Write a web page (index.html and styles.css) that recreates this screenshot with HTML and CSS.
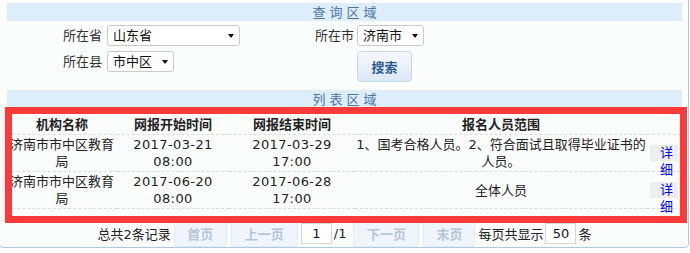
FILE: index.html
```html
<!DOCTYPE html>
<html lang="zh-CN">
<head>
<meta charset="UTF-8">
<title>查询区域</title>
<link rel="stylesheet" href="styles.css">
</head>
<body>

<div class="panel">
    <!-- 查询区域 -->
    <div class="bar">查询区域</div>
    <div class="query-form">
        <span class="label">所在省</span>
        <span class="field"><span class="select wide">山东省<i class="arrow"></i></span></span>
        <span class="label">所在市</span>
        <span class="field"><span class="select">济南市<i class="arrow"></i></span></span>

        <span class="label">所在县</span>
        <span class="field"><span class="select">市中区<i class="arrow"></i></span></span>
        <span class="label"></span>
        <span class="field"><button class="search-btn">搜索</button></span>
    </div>

    <!-- 列表区域 -->
    <div class="bar bar-list">列表区域</div>
    <table class="list">
        <colgroup>
            <col style="width: 110px">
            <col style="width: 112px">
            <col style="width: 126px">
            <col style="width: 292px">
            <col style="width: 34px">
        </colgroup>
        <thead>
            <tr>
                <th>机构名称</th>
                <th>网报开始时间</th>
                <th>网报结束时间</th>
                <th>报名人员范围</th>
                <th></th>
            </tr>
        </thead>
        <tbody>
            <tr>
                <td>济南市市中区教育局</td>
                <td class="date">2017-03-21 08:00</td>
                <td class="date">2017-03-29 17:00</td>
                <td>1、国考合格人员。2、符合面试且取得毕业证书的人员。</td>
                <td class="op"><div class="op-wrap"><a href="#" class="detail"><span class="first">详</span><span class="second">细</span></a></div></td>
            </tr>
            <tr>
                <td>济南市市中区教育局</td>
                <td class="date">2017-06-20 08:00</td>
                <td class="date">2017-06-28 17:00</td>
                <td>全体人员</td>
                <td class="op"><div class="op-wrap"><a href="#" class="detail"><span class="first">详</span><span class="second">细</span></a></div></td>
            </tr>
        </tbody>
    </table>

    <div class="pager">
        <span class="pager-text">总共2条记录</span>
        <button class="page-btn w53">首页</button>
        <button class="page-btn w67">上一页</button>
        <span class="page-input">1</span>
        <span class="pager-text slash">/1</span>
        <button class="page-btn w66">下一页</button>
        <button class="page-btn w52">末页</button>
        <span class="pager-text">每页共显示</span>
        <span class="page-input">50</span>
        <span class="pager-text">条</span>
    </div>

    <!-- highlight frame -->
    <div class="highlight"></div>
</div>

</body>
</html>
```

FILE: styles.css
```css
/* page base */
body {
    margin: 0;
    font-family: "DejaVu Sans", "Noto Sans CJK SC", sans-serif;
    font-size: 13px;
    color: #222;
    background: #fff;
}

.panel {
    position: relative;
    margin: -4px 1px 0 -1px;
    padding: 6px 6px 0 7px;
    border: 1px solid #adc8e0;
    border-radius: 4px;
    background: #fbfdfd;
}

/* section title bars */
.bar {
    height: 18px;
    line-height: 18px;
    background: #deedfa;
    color: #4a77a6;
    text-align: center;
    letter-spacing: 4px;
    padding-left: 4px;
    font-family: "Noto Sans CJK SC", sans-serif;
}

.bar-list {
    height: 17px;
    line-height: 17px;
    margin-top: 8px;
}

/* query form */
.query-form {
    display: grid;
    grid-template-columns: 96px 206px 46px auto;
    row-gap: 5px;
    margin-top: 4px;
    align-items: start;
}

.label {
    text-align: right;
    line-height: 21px;
    color: #333;
    padding-right: 1px;
}

.field {
    padding-left: 4px;
}

.query-form .field:nth-child(4n) {
    padding-left: 2px;
}

.select {
    box-sizing: border-box;
    display: inline-flex;
    align-items: center;
    justify-content: space-between;
    height: 21px;
    width: 67px;
    padding: 0 5px;
    border: 1px solid #cacaca;
    border-radius: 3px;
    background: #fff;
    color: #111;
    line-height: 19px;
}

.select.wide {
    width: 133px;
}

.arrow {
    width: 0;
    height: 0;
    border-top: 4px solid #111;
    border-left: 3.5px solid transparent;
    border-right: 3.5px solid transparent;
}

.search-btn {
    box-sizing: border-box;
    width: 55px;
    height: 31px;
    padding: 0;
    border: 1px solid #c5d8eb;
    border-radius: 4px;
    background: linear-gradient(#f6f9fd, #dae8f6);
    color: #2d5d8c;
    font-family: "Noto Sans CJK SC", sans-serif;
    font-size: 13px;
    font-weight: bold;
}

/* list table */
.list {
    width: 674px;
    table-layout: fixed;
    border-collapse: collapse;
    color: #222;
}

.list th {
    padding: 8px 0 0;
    line-height: 19px;
    font-weight: bold;
    text-align: center;
    border-bottom: 1px dashed #dcdcdc;
}

.list td {
    padding: 1px 0;
    line-height: 17px;
    text-align: center;
    vertical-align: middle;
    border-bottom: 1px dashed #dcdcdc;
}

.list td.date {
    padding: 1px 5px;
    letter-spacing: 0.4px;
}

.list td.op {
    vertical-align: top;
    padding: 10px 0 0 3px;
    text-align: left;
}

.op-wrap {
    margin-bottom: -10px;
}

.detail {
    display: block;
    width: 28px;
    color: #0000ee;
    text-decoration: none;
}

.detail .first,
.detail .second {
    display: block;
    padding-left: 10px;
    line-height: 16px;
}

.detail .first {
    height: 16px;
    background: #eeeeee;
}

.detail .second {
    line-height: 18px;
}

/* pager */
.pager {
    display: flex;
    align-items: center;
    justify-content: center;
    margin-top: 11px;
    height: 27px;
}

.pager-text {
    color: #222;
    margin: 0 1px;
}

.slash {
    margin-right: 5px;
}

.page-btn {
    box-sizing: border-box;
    height: 27px;
    margin: 0 2px;
    padding: 0;
    border: 1px solid #e3ebf4;
    border-radius: 3px;
    background: #f0f5fb;
    color: #b3c6da;
    font-family: "Noto Sans CJK SC", sans-serif;
    font-size: 13px;
    font-weight: bold;
}

.w53 { width: 53px; }
.w67 { width: 67px; }
.w66 { width: 66px; }
.w52 { width: 52px; }

.page-input {
    box-sizing: border-box;
    width: 31px;
    height: 21px;
    margin: 0 1px;
    line-height: 19px;
    text-align: center;
    border: 1px solid #d6d6d6;
    background: #fff;
    color: #111;
}

/* red annotation frame over the list */
.highlight {
    position: absolute;
    left: 5px;
    top: 110px;
    width: 682px;
    height: 116px;
    box-sizing: border-box;
    border: 7px solid #fd3a3a;
}
```
